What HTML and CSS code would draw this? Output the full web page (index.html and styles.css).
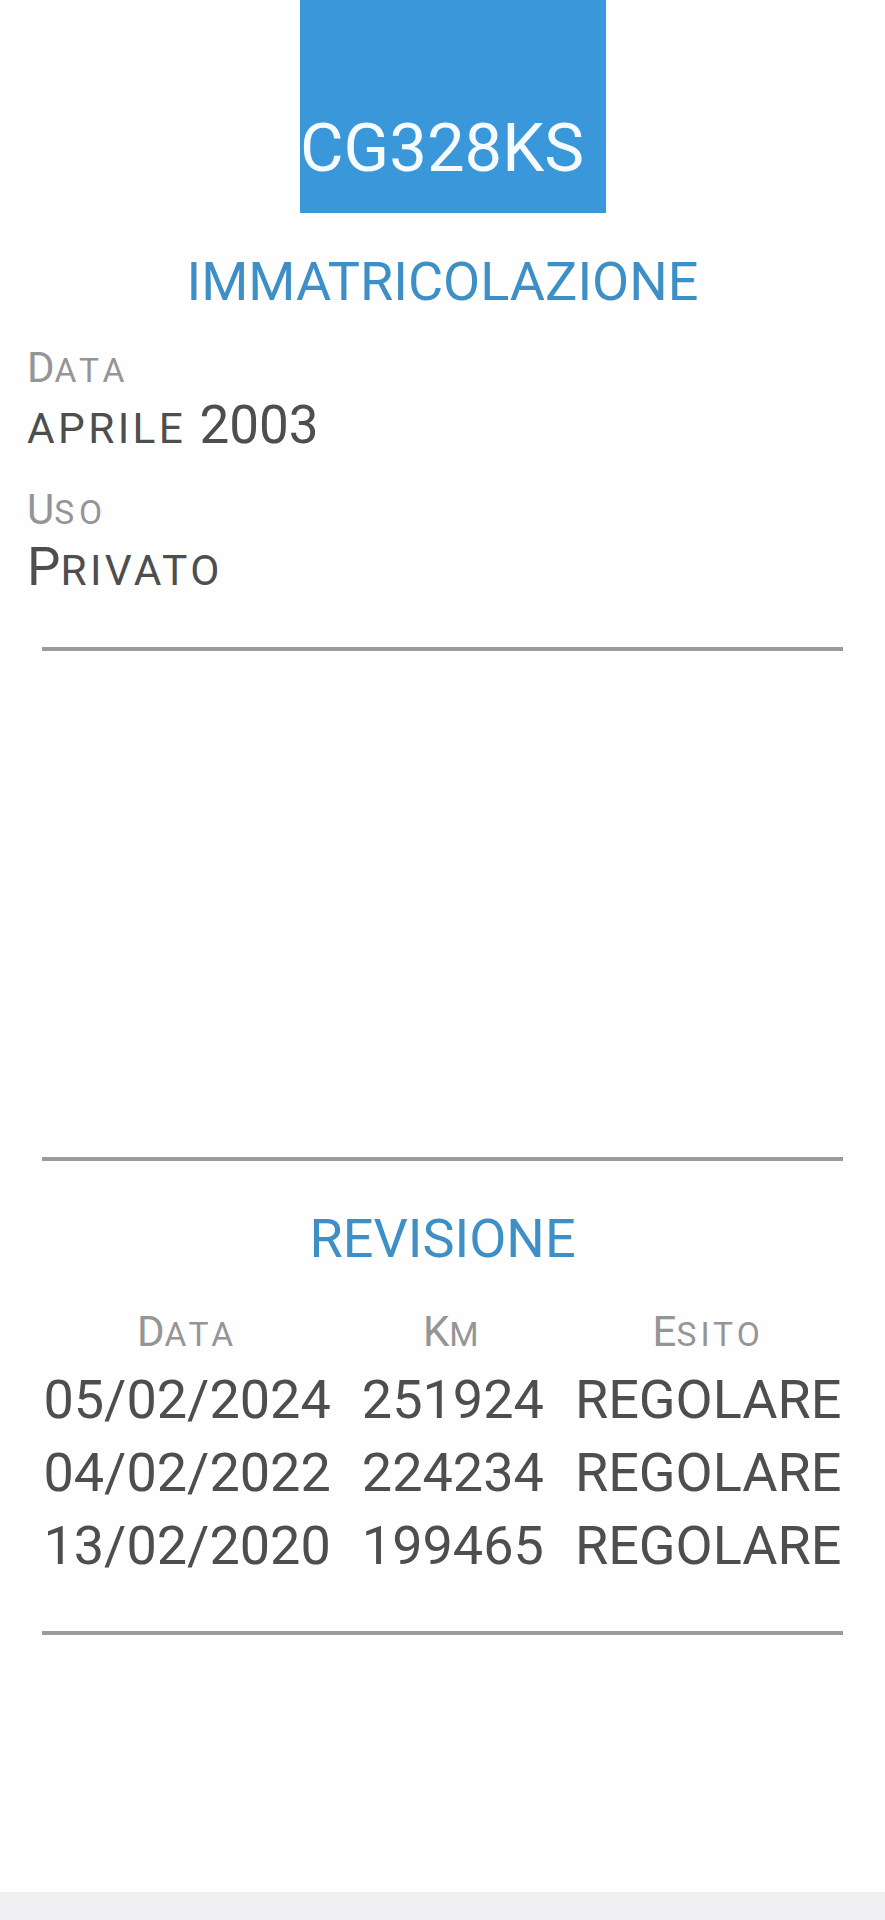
FILE: index.html
```html
<!DOCTYPE html>
<html lang="it">
<head>
    <meta charset="UTF-8">
    <title>Veicolo CG328KS</title>
    <link rel="stylesheet" href="styles.css">
</head>
<body>
    <div class="page">
        <div class="plate">
            <span class="plate-number">CG328KS</span>
        </div>

        <h2 class="section-title first">IMMATRICOLAZIONE</h2>
        <div class="details">
            <div class="field">
                <div class="label">D<span class="sc">ata</span></div>
                <div class="value"><span class="sc">aprile</span> 2003</div>
            </div>
            <div class="field">
                <div class="label">U<span class="sc">so</span></div>
                <div class="value">P<span class="sc">rivato</span></div>
            </div>
        </div>
        <div class="divider"></div>

        <div class="blank"></div>

        <div class="divider"></div>
        <h2 class="section-title second">REVISIONE</h2>
        <div class="revisioni">
            <div class="head">D<span class="sc">ata</span></div>
            <div class="head">K<span class="sc">m</span></div>
            <div class="head">E<span class="sc">sito</span></div>

            <div class="cell">05/02/2024</div>
            <div class="cell">251924</div>
            <div class="cell">REGOLARE</div>

            <div class="cell">04/02/2022</div>
            <div class="cell">224234</div>
            <div class="cell">REGOLARE</div>

            <div class="cell">13/02/2020</div>
            <div class="cell">199465</div>
            <div class="cell">REGOLARE</div>
        </div>
        <div class="divider last"></div>

        <div class="bottom-bar"></div>
    </div>
</body>
</html>
```

FILE: styles.css
```css
body {
    margin: 0;
    background-color: #fefefe;
    font-family: "Roboto", "Liberation Sans", sans-serif;
}
.page {
    display: flex;
    flex-direction: column;
    min-height: 100vh;
}
.plate {
    box-sizing: border-box;
    width: 306px;
    height: 213px;
    margin-left: 300px;
    padding-top: 115px;
    background-color: #3997da;
}
.plate-number {
    display: block;
    font-size: 67px;
    line-height: 66px;
    color: #f6fbff;
}
.section-title {
    margin: 0;
    font-size: 54px;
    line-height: 64px;
    font-weight: 400;
    text-align: center;
    color: #3e8fc5;
}
.section-title.first {
    margin-top: 37px;
}
.section-title.second {
    margin-top: 46px;
}
.details {
    margin-top: 29px;
    padding: 0 27px;
}
.field + .field {
    margin-top: 30px;
}
.label {
    font-size: 42px;
    line-height: 50px;
    color: #959595;
}
.value {
    margin-top: 2px;
    font-size: 53px;
    line-height: 60px;
    color: #4e4e4e;
}
.sc {
    font-size: 0.8em;
    line-height: 1;
    text-transform: uppercase;
    letter-spacing: 0.08em;
}
.label .sc {
    letter-spacing: 0.14em;
}
.divider {
    height: 4px;
    margin: 50px 42px 0;
    background-color: #9b9b9b;
}
.blank {
    height: 506px;
}
.blank + .divider {
    margin-top: 0;
}
.revisioni {
    display: grid;
    grid-template-columns: repeat(3, auto);
    column-gap: 31px;
    justify-content: center;
    justify-items: center;
    margin-top: 37px;
}
.head {
    font-size: 42px;
    line-height: 48px;
    margin-bottom: 7px;
    color: #959595;
}
.head .sc {
    letter-spacing: 0.12em;
}
.cell {
    font-size: 54px;
    line-height: 73px;
    color: #4e4e4e;
}
.divider.last {
    margin-top: 49px;
}
.bottom-bar {
    height: 28px;
    margin-top: auto;
    background-color: #f0f0f3;
}
```
